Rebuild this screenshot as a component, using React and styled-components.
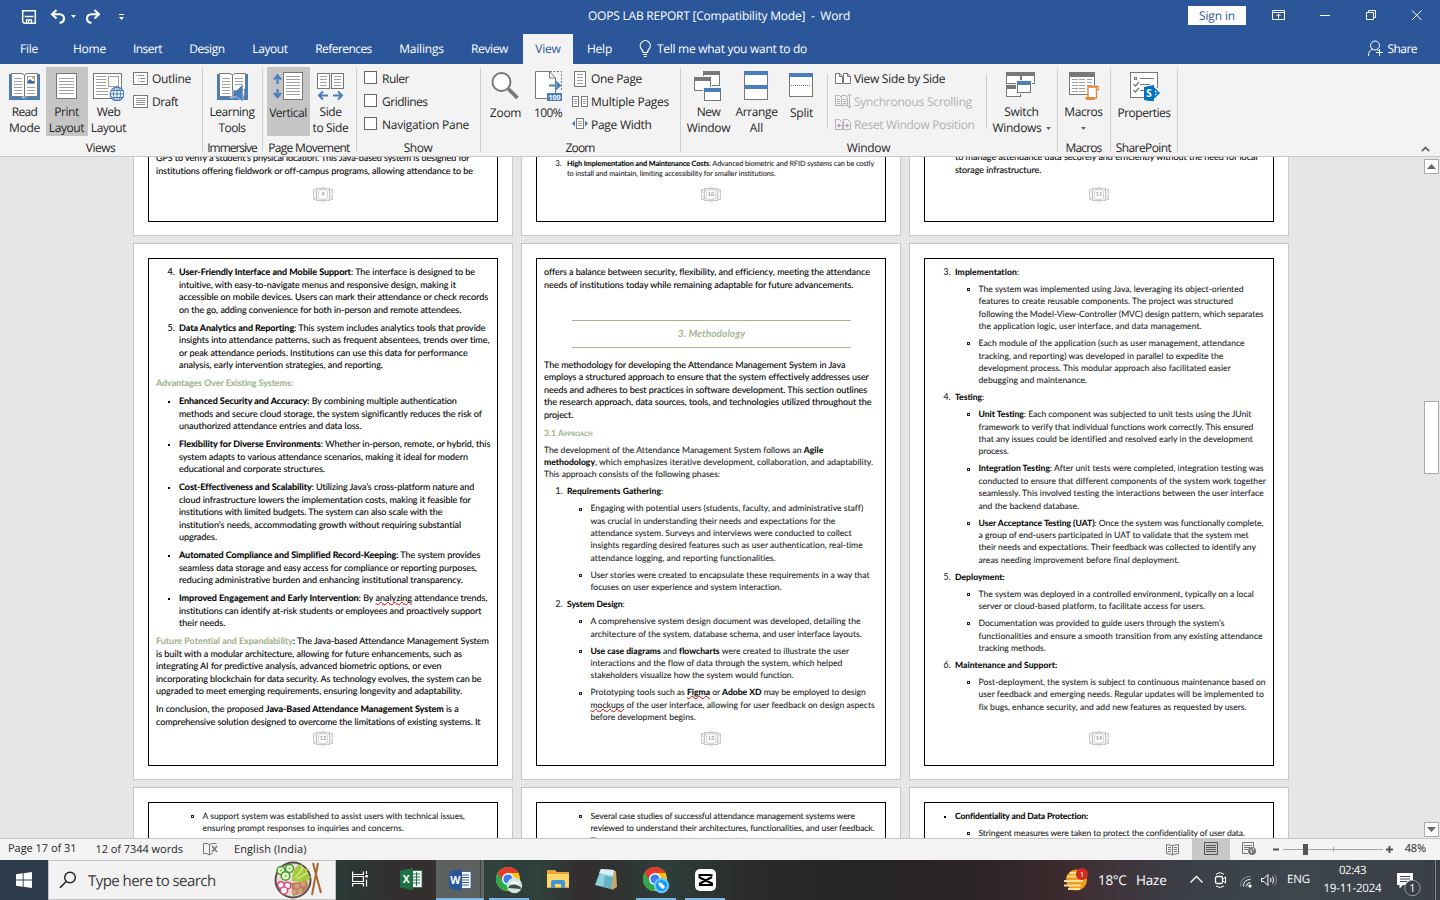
import React, { useLayoutEffect, useRef } from "react";
import styled, { createGlobalStyle, css } from "styled-components";

const Global = createGlobalStyle`
  * { box-sizing: border-box; }
  body { margin: 0; overflow: hidden; background: #e6e6e6; }
  svg { display: block; flex: none; }
`;

const UI = `"Open Sans", "Noto Sans", sans-serif`;
const DOC = `Lato, "Open Sans", sans-serif`;

/* ---------- text whose tracking is adjusted to a measured width ---------- */
const FitSpan = styled.span`
  display: inline-block;
  white-space: pre;
  text-rendering: geometricPrecision;
`;

function Fit({ w, children, className }) {
  const ref = useRef(null);
  useLayoutEffect(() => {
    const el = ref.current;
    el.style.letterSpacing = "0px";
    const natural = el.getBoundingClientRect().width;
    const n = el.textContent.length;
    if (w && n) el.style.letterSpacing = `${(w - natural) / n}px`;
  }, [w, children]);
  return <FitSpan ref={ref} className={className}>{children}</FitSpan>;
}

/* ---------- shell ---------- */
const Window = styled.div`
  width: 1440px;
  height: 900px;
  display: flex;
  flex-direction: column;
  overflow: hidden;
  font-family: ${UI};
  font-size: 12px;
  color: #262626;
`;

const TitleBar = styled.header`
  height: 34px;
  flex: none;
  background: #2b579a;
  color: #fff;
  display: flex;
  align-items: center;
`;
const QuickAccess = styled.div`
  display: flex;
  align-items: center;
  padding: 0 0 1px 20px;
  width: 588px;
`;
const Title = styled.div`
  width: 600px;
  line-height: 16px;
  padding-bottom: 2px;
`;
const SignIn = styled.div`
  width: 58px;
  height: 19px;
  margin-top: -3px;
  background: #fff;
  color: #2b579a;
  display: flex;
  align-items: center;
  justify-content: center;
`;
const WindowControls = styled.div`
  display: flex;
  align-items: center;
  padding-left: 26px;
  padding-bottom: 4px;
`;

const TabBar = styled.nav`
  height: 30px;
  flex: none;
  background: #2b579a;
  color: #fff;
  display: flex;
`;
const Tab = styled.div`
  width: ${(p) => p.$w}px;
  display: flex;
  align-items: center;
  justify-content: center;
  padding-bottom: 1px;
  ${(p) => p.$active && css`background: #f3f3f3; color: #2b579a;`}
`;
const TellMe = styled.div`
  display: flex;
  align-items: center;
  gap: 5px;
  padding: 0 0 1px 13px;
  flex: 1;
`;
const Share = styled.div`
  display: flex;
  align-items: center;
  gap: 4px;
  padding: 0 23px 1px 0;
`;

/* ---------- ribbon ---------- */
const Ribbon = styled.section`
  height: 93px;
  flex: none;
  background: #f3f3f3;
  border-bottom: 1px solid #c8c8c8;
  display: flex;
`;
const GroupBox = styled.div`
  width: ${(p) => p.$w}px;
  padding-top: 3px;
  display: flex;
  flex-direction: column;
  background: linear-gradient(#cfcfcf, #cfcfcf) right 4px / 1px 84px no-repeat;
`;
const GroupBody = styled.div`
  height: 72px;
  display: flex;
  padding-left: ${(p) => p.$pad || 0}px;
`;
const GroupLabel = styled.div`
  line-height: 16px;
  display: flex;
  justify-content: center;
  padding: 1px 2px 0 0;
`;
const BigButton = styled.div`
  width: ${(p) => p.$w}px;
  height: 69px;
  padding-right: 1px;
  display: flex;
  flex-direction: column;
  align-items: center;
  background: ${(p) => (p.$on ? "#c5c5c5" : "transparent")};
`;
const BigIcon = styled.div`
  height: 38px;
  display: flex;
  align-items: center;
  padding: 0 1px 2px 0;
`;
const BigLabel = styled.div`
  height: 16px;
  line-height: 16px;
  display: flex;
  justify-content: center;
  align-items: center;
  gap: 4px;
  white-space: nowrap;
`;
const SmallColumn = styled.div`
  width: ${(p) => p.$w}px;
  padding-left: ${(p) => p.$pad || 0}px;
`;
const SmallRow = styled.div`
  height: 23px;
  display: flex;
  align-items: center;
  gap: ${(p) => p.$gap ?? 4}px;
  color: ${(p) => (p.$off ? "#b1b1b1" : "inherit")};
`;
const SmallIcon = styled.div`
  width: 16px;
`;
const CheckBox = styled.div`
  width: 13px;
  height: 13px;
  margin-top: -2px;
  border: 1px solid #666;
  background: #fff;
`;
const Divider = styled.div`
  width: 1px;
  height: 55px;
  margin-top: 7px;
  margin-left: ${(p) => p.$gap || 0}px;
  background: #cfcfcf;
`;
const Collapse = styled.div`
  margin: auto 10px 4px auto;
`;

/* ---------- document ---------- */
const DocArea = styled.main`
  height: 681px;
  flex: none;
  display: flex;
  overflow: hidden;
  background: #e6e6e6;
`;
const Sheets = styled.div`
  width: 1424px;
  padding-left: 133px;
  margin-top: -458px;
  display: grid;
  grid-template-columns: repeat(3, 380px);
  grid-auto-rows: 537px;
  gap: 7px 8px;
  align-content: start;
`;
const Sheet = styled.article`
  background: #fff;
  border: 1px solid #c6c6c6;
  padding: 14px 14px 13px;
`;
const Frame = styled.div`
  width: 350px;
  height: 508px;
  border: 1px solid #000;
  padding: 7px 0 0 7px;
  display: flex;
  flex-direction: column;
`;
const Body = styled.div`
  flex: 1;
  min-height: 0;
  display: flex;
  flex-direction: column;
  justify-content: ${(p) => (p.$end ? "flex-end" : "flex-start")};
  padding-bottom: ${(p) => (p.$end || 0)}px;
  font-family: ${DOC};
`;
const sizes = {
  normal: css`font-size: 9px; line-height: 12.5px; color: #000; -webkit-text-stroke: 0.1px #000;`,
  soft: css`font-size: 8.6px; line-height: 12.4px; color: #222; -webkit-text-stroke: 0.08px #222;`,
  tiny: css`font-size: 7.3px; line-height: 10px; color: #222; -webkit-text-stroke: 0.08px #222;`,
};
const Para = styled.div`
  flex: none;
  display: flex;
  align-items: flex-start;
  padding-left: ${(p) => [0, 11.5, 35][p.$level]}px;
  margin-bottom: ${(p) => (p.$kind === "normal" ? 5.55 : 4.6)}px;
  ${(p) => sizes[p.$kind]}
  ${(p) => p.$green && css`color: #a5b592; -webkit-text-stroke-color: #a5b592; font-weight: 700;`}
  ${(p) => p.$caps && css`font-variant: small-caps;`}
  &:last-child { margin-bottom: 0; }
`;
const Marker = styled.span`
  width: 11.5px;
  flex: none;
  display: flex;
  align-items: center;
  height: 1lh;
`;
const Dot = styled.i`
  width: 2px;
  height: 2px;
  margin-top: 1px;
  background: #000;
`;
const Ring = styled.i`
  width: 3px;
  height: 3px;
  margin-top: 1px;
  border: 1px solid #222;
`;
const Lines = styled.div`
  display: flex;
  flex-direction: column;
  align-items: flex-start;
  & > span { height: 1lh; }
`;
const Strong = styled.b`
  font-weight: 700;
  color: #000;
`;
const Green = styled.b`
  color: #a5b592;
  -webkit-text-stroke-color: #a5b592;
`;
const Misspelt = styled.span`
  text-decoration: underline wavy #e00000 0.9px;
  text-underline-offset: 0;
  text-decoration-skip-ink: none;
`;
const Heading = styled.div`
  flex: none;
  width: 279px;
  height: 28px;
  margin: 23.2px 0 10.8px 28px;
  padding-top: 1px;
  border: solid #a5b592;
  border-width: 1px 0;
  display: flex;
  align-items: center;
  justify-content: center;
  color: #a5b592;
  font-size: 10px;
  font-style: italic;
  font-weight: 700;
`;
const BadgeRow = styled.div`
  flex: none;
  height: 17px;
  margin: 0 7px 18px 0;
  display: flex;
  justify-content: center;
`;

function rich(text) {
  return text.split(/(\*\*.+?\*\*|\[\[.+?\]\]|\{\{.+?\}\})/).map((t, i) => {
    if (t.startsWith("**")) return <Strong key={i}>{rich(t.slice(2, -2))}</Strong>;
    if (t.startsWith("[[")) return <Misspelt key={i}>{t.slice(2, -2)}</Misspelt>;
    if (t.startsWith("{{")) return <Green key={i}>{t.slice(2, -2)}</Green>;
    return t;
  });
}

function P({ kind = "normal", level = 0, mark, lines, green, caps }) {
  return (
    <Para $kind={kind} $level={level} $green={green} $caps={caps}>
      {level > 0 && <Marker>{mark === "dot" ? <Dot /> : mark === "ring" ? <Ring /> : mark}</Marker>}
      <Lines>
        {lines.map(([w, t]) => <Fit key={t} w={w}>{rich(t)}</Fit>)}
      </Lines>
    </Para>
  );
}

function PageBadge({ n }) {
  return (
    <svg width="20" height="17" viewBox="0 0 20 17" fill="none" stroke="#c6c6c6">
      <path d="M10 .6l3.500 2.500h-7zM10 16.400l3.500-2.500h-7z" strokeWidth=".8" />
      <rect x="3.500" y="2.500" width="13" height="12" />
      <path d="M3 3.500H.5v10H3M17 3.500h2.500v10H17" strokeWidth=".9" />
      <path d="M1 4l2.500 4.500L1 13M19 4l-2.500 4.500L19 13M4 12.500q6 1.500 12 0M4 4.500q6-1.500 12 0M5.500 5v7M14.500 5v7" strokeWidth=".7" />
      <text x="10" y="10.300" textAnchor="middle" fontSize="5.500" fontFamily="Lato, sans-serif" fontWeight="700" fill="#999" stroke="none">{n}</text>
    </svg>
  );
}

function Page({ n, end, children }) {
  return (
    <Sheet>
      <Frame>
        <Body $end={end}>{children}</Body>
        <BadgeRow><PageBadge n={n} /></BadgeRow>
      </Frame>
    </Sheet>
  );
}

const S = (level, mark, lines) => ({ kind: "soft", level, mark, lines });
const N = (level, mark, lines) => ({ level, mark, lines });

const page12 = [
  N(1, "4.", [[296, "**User-Friendly Interface and Mobile Support**: The interface is designed to be"], [277, "intuitive, with easy-to-navigate menus and responsive design, making it"], [308.7, "accessible on mobile devices. Users can mark their attendance or check records"], [282, "on the go, adding convenience for both in-person and remote attendees."]]),
  N(1, "5.", [[307, "**Data Analytics and Reporting**: This system includes analytics tools that provide"], [310, "insights into attendance patterns, such as frequent absentees, trends over time,"], [288.7, "or peak attendance periods. Institutions can use this data for performance"], [204.3, "analysis, early intervention strategies, and reporting."]]),
  { green: true, lines: [[137.3, "Advantages Over Existing Systems:"]] },
  N(1, "dot", [[278.3, "**Enhanced Security and Accuracy**: By combining multiple authentication"], [302.7, "methods and secure cloud storage, the system significantly reduces the risk of"], [182.3, "unauthorized attendance entries and data loss."]]),
  N(1, "dot", [[311.3, "**Flexibility for Diverse Environments**: Whether in-person, remote, or hybrid, this"], [288.7, "system adapts to various attendance scenarios, making it ideal for modern"], [146, "educational and corporate structures."]]),
  N(1, "dot", [[295, "**Cost-Effectiveness and Scalability**: Utilizing Java’s cross-platform nature and"], [292, "cloud infrastructure lowers the implementation costs, making it feasible for"], [263.7, "institutions with limited budgets. The system can also scale with the"], [282.7, "institution’s needs, accommodating growth without requiring substantial"], [38, "upgrades."]]),
  N(1, "dot", [[301.3, "**Automated Compliance and Simplified Record-Keeping**: The system provides"], [298, "seamless data storage and easy access for compliance or reporting purposes,"], [284.3, "reducing administrative burden and enhancing institutional transparency."]]),
  N(1, "dot", [[308.3, "**Improved Engagement and Early Intervention**: By [[analyzing]] attendance trends,"], [303, "institutions can identify at-risk students or employees and proactively support"], [46.3, "their needs."]]),
  N(0, "", [[332.7, "{{Future Potential and Expandability}}: The Java-based Attendance Management System"], [306, "is built with a modular architecture, allowing for future enhancements, such as"], [286, "integrating AI for predictive analysis, advanced biometric options, or even"], [325.7, "incorporating blockchain for data security. As technology evolves, the system can be"], [306.3, "upgraded to meet emerging requirements, ensuring longevity and adaptability."]]),
  N(0, "", [[302.3, "In conclusion, the proposed **Java-Based Attendance Management System** is a"], [325, "comprehensive solution designed to overcome the limitations of existing systems. It"]]),
];

const page13 = [
  N(0, "", [[301, "The methodology for developing the Attendance Management System in Java"], [324.7, "employs a structured approach to ensure that the system effectively addresses user"], [323.3, "needs and adheres to best practices in software development. This section outlines"], [327.7, "the research approach, data sources, tools, and technologies utilized throughout the"], [29.3, "project."]]),
  { kind: "soft", green: true, caps: true, lines: [[48.7, "3.1 Approach"]] },
  S(0, "", [[279, "The development of the Attendance Management System follows an **Agile**"], [329.3, "**methodology**, which emphasizes iterative development, collaboration, and adaptability."], [176, "This approach consists of the following phases:"]]),
  S(1, "1.", [[96.3, "**Requirements Gathering**:"]]),
  S(2, "ring", [[272.7, "Engaging with potential users (students, faculty, and administrative staff)"], [245, "was crucial in understanding their needs and expectations for the"], [260.7, "attendance system. Surveys and interviews were conducted to collect"], [272.7, "insights regarding desired features such as user authentication, real-time"], [185.3, "attendance logging, and reporting functionalities."]]),
  S(2, "ring", [[279, "User stories were created to encapsulate these requirements in a way that"], [191.3, "focuses on user experience and system interaction."]]),
  S(1, "2.", [[57.7, "**System Design**:"]]),
  S(2, "ring", [[270, "A comprehensive system design document was developed, detailing the"], [271.3, "architecture of the system, database schema, and user interface layouts."]]),
  S(2, "ring", [[258.7, "**Use case diagrams** and **flowcharts** were created to illustrate the user"], [252, "interactions and the flow of data through the system, which helped"], [203.3, "stakeholders visualize how the system would function."]]),
  S(2, "ring", [[275.3, "Prototyping tools such as **[[Figma]]** or **Adobe XD** may be employed to design"], [284.3, "[[mockups]] of the user interface, allowing for user feedback on design aspects"], [105.3, "before development begins."]]),
];

const page14 = [
  S(1, "3.", [[64.3, "**Implementation**:"]]),
  S(2, "ring", [[265, "The system was implemented using Java, leveraging its object-oriented"], [254.7, "features to create reusable components. The project was structured"], [284.7, "following the Model-View-Controller (MVC) design pattern, which separates"], [223.3, "the application logic, user interface, and data management."]]),
  S(2, "ring", [[266, "Each module of the application (such as user management, attendance"], [245, "tracking, and reporting) was developed in parallel to expedite the"], [252.3, "development process. This modular approach also facilitated easier"], [108.7, "debugging and maintenance."]]),
  S(1, "4.", [[29.3, "**Testing**:"]]),
  S(2, "ring", [[273, "**Unit Testing**: Each component was subjected to unit tests using the JUnit"], [275, "framework to verify that individual functions work correctly. This ensured"], [274.3, "that any issues could be identified and resolved early in the development"], [30.3, "process."]]),
  S(2, "ring", [[285.3, "**Integration Testing**: After unit tests were completed, integration testing was"], [287, "conducted to ensure that different components of the system work together"], [285.3, "seamlessly. This involved testing the interactions between the user interface"], [100.7, "and the backend database."]]),
  S(2, "ring", [[285.3, "**User Acceptance Testing (UAT)**: Once the system was functionally complete,"], [270.3, "a group of end-users participated in UAT to validate that the system met"], [277.7, "their needs and expectations. Their feedback was collected to identify any"], [200.7, "areas needing improvement before final deployment."]]),
  S(1, "5.", [[49.7, "**Deployment:**"]]),
  S(2, "ring", [[275.3, "The system was deployed in a controlled environment, typically on a local"], [226.3, "server or cloud-based platform, to facilitate access for users."]]),
  S(2, "ring", [[246, "Documentation was provided to guide users through the system’s"], [284.3, "functionalities and ensure a smooth transition from any existing attendance"], [67.3, "tracking methods."]]),
  S(1, "6.", [[102.3, "**Maintenance and Support:**"]]),
  S(2, "ring", [[287.3, "Post-deployment, the system is subject to continuous maintenance based on"], [285.3, "user feedback and emerging needs. Regular updates will be implemented to"], [268, "fix bugs, enhance security, and add new features as requested by users."]]),
];

const list = (items) => items.map((p, i) => <P key={i} {...p} />);

/* ---------- scrollbar ---------- */
const ScrollTrack = styled.div`
  width: 16px;
  padding: 2px 1px 1px 0;
  display: flex;
  flex-direction: column;
`;
const ScrollButton = styled.div`
  height: 15px;
  border: 1px solid #ababab;
  background: #fff;
  display: flex;
  align-items: center;
  justify-content: center;
`;
const ScrollThumb = styled.div`
  height: 73px;
  margin: 227px 0 auto;
  border: 1px solid #ababab;
  background: #fff;
`;

/* ---------- status bar ---------- */
const StatusBar = styled.footer`
  height: 22px;
  flex: none;
  background: #f3f3f3;
  border-top: 1px solid #c6c6c6;
  display: flex;
  align-items: center;
  font-size: 11px;
`;
const StatusItem = styled.div`
  width: ${(p) => p.$w}px;
  line-height: 16px;
  padding-left: ${(p) => p.$pad || 0}px;
  padding-bottom: ${(p) => p.$lift || 0}px;
`;
const ViewMode = styled.div`
  width: 38px;
  height: 21px;
  display: flex;
  align-items: center;
  justify-content: center;
  background: ${(p) => (p.$on ? "#c8c8c8" : "transparent")};
`;
const ZoomSlider = styled.div`
  padding: 0 0 2px 5px;
  width: 136.7px;
`;

/* ---------- taskbar ---------- */
const TaskBar = styled.footer`
  height: 40px;
  flex: none;
  display: flex;
  align-items: stretch;
  color: #fff;
  background: linear-gradient(90deg, #2d3d4b 0, #2d3d4b 48px, #2a3a36 336px, #332f2f 395px, #332f2f 430px, #2e413d 490px, #30403c 540px, #332f2f 580px, #2f3331 620px, #2e3f3c 665px, #2b2b2b 745px, #262524 860px, #2d2526 990px, #3b292c 1050px, #40343a 1110px, #3a4149 1200px, #3e464d 1300px, #393f47 1440px);
`;
const Start = styled.div`
  width: 48px;
  display: flex;
  align-items: center;
  justify-content: center;
`;
const Search = styled.div`
  width: 288px;
  background: #f2f2f2;
  border: 1px solid #c4c4c4;
  color: #3b3b3b;
  display: flex;
  align-items: center;
  padding-left: 10px;
  font-size: 15px;
`;
const SearchText = styled.div`
  width: 196px;
  padding-left: 11px;
  line-height: 20px;
`;
const TaskItem = styled.div`
  width: ${(p) => p.$w || 48}px;
  padding: 0 0 ${(p) => (p.$open ? 0 : 2)}px ${(p) => p.$pad || 0}px;
  display: flex;
  align-items: center;
  justify-content: center;
  ${(p) => p.$active && css`background: linear-gradient(90deg, #5d6160 44px, #3a4340 44px, #3a4340 45px, #5d6866 45px);`}
  ${(p) => p.$open && css`
    &::after { content: ""; position: absolute; width: ${p.$active ? 48 : 40}px; height: 2px; margin-top: 38px; background: #76b9ed; }
  `}
`;
const Tray = styled.div`
  margin-left: auto;
  width: 376px;
  display: flex;
  align-items: center;
  font-size: 13.5px;
`;
const TraySlot = styled.div`
  width: ${(p) => p.$w}px;
  display: flex;
  align-items: center;
  flex-direction: ${(p) => (p.$col ? "column" : "row")};
  justify-content: ${(p) => (p.$mid ? "center" : "flex-start")};
  font-size: ${(p) => p.$size || 13.5}px;
  line-height: 18px;
`;
const ShowDesktop = styled.div`
  width: 5px;
  height: 40px;
  margin-left: auto;
  border-left: 1px solid #7c8287;
`;

/* ---------- icons ---------- */
const G = "#777";
const B = "#4a7ebb";
const hlines = (x1, x2, ys) => ys.map((y) => `M${x1} ${y}H${x2}`).join("");

const Svg = ({ w = 32, h = 32, children, ...r }) => (
  <svg width={w} height={h} viewBox={`0 0 ${w} ${h}`} fill="none" {...r}>{children}</svg>
);
const Book = () => (
  <>
    <path d="M1 5H3V28H13L16 29.500L19 28H29V5H32V31H1Z" fill={B} />
    <path d="M3.500 4.500H13Q15 4.500 16.500 6Q18 4.500 20 4.500H29.500V27.500H19.500Q17.500 27.500 16.500 28.500Q15.500 27.500 13.500 27.500H3.500Z" fill="#fff" stroke={G} />
    <path d="M16.500 6V28" stroke={G} />
    <path d={hlines(6, 14, [9.5, 12.5, 15.5, 18.5, 21.5, 24.5])} stroke="#a0a0a0" />
  </>
);
const IconRead = () => (
  <Svg><Book /><rect x="19.500" y="7.500" width="7" height="7" fill="#fff" stroke="#a0a0a0" /><path d="M20 14V12l2-2 2 2h2v2z" fill="#2f6aa8" /><rect x="24" y="8" width="2" height="2" fill="#f2b880" /><path d={hlines(19, 27, [18.5, 21.5, 24.5])} stroke="#a0a0a0" /></Svg>
);
const IconPrint = () => (
  <Svg><rect x="6.500" y="4.500" width="20" height="25" fill="#fff" stroke={G} /><path d={hlines(9, 24, [9.5, 12.5, 15.5, 18.5, 21.5, 24.5])} stroke="#a0a0a0" /></Svg>
);
const IconWeb = () => (
  <Svg><rect x="1.500" y="4.500" width="28" height="25" fill="#fff" stroke={G} /><path d={hlines(4, 14, [7.5, 10.5, 13.5, 16.5]) + hlines(4, 16, [19.5, 22.5, 25.5])} stroke="#a0a0a0" /><rect x="16.500" y="7.500" width="10" height="10" stroke="#a0a0a0" /><circle cx="25" cy="25" r="6.800" fill="#fff" stroke={B} strokeWidth="1.300" /><path d="M18 25H32M25 18V32M19.500 21.500H30.500M19.500 28.500H30.500" stroke={B} /><ellipse cx="25" cy="25" rx="3.500" ry="7" stroke={B} /></Svg>
);
const IconLearn = () => (
  <Svg><Book /><path d={hlines(19, 27, [9.5, 12.5, 15.5])} stroke="#a0a0a0" /><path d="M17 21h4l6-6v18l-6-5h-4z" fill={B} stroke="#f3f3f3" strokeWidth=".6" /><path d="M28 20q2 3 0 7M29.500 17q4 6 0 12.500" stroke={B} strokeWidth="1.300" /></Svg>
);
const IconVertical = () => (
  <Svg><path d="M5.500 6.500V15M5.500 20V28M2 10.500l3.500-4 3.500 4M2 24l3.500 4 3.500-4" stroke={B} strokeWidth="2.200" /><rect x="11.500" y="3.500" width="19" height="27" fill="#fff" stroke={G} /><path d={hlines(14, 28, [7.5, 10.5, 13.5, 16.5, 19.5, 22.5, 25.5])} stroke="#a0a0a0" /></Svg>
);
const IconSide = () => (
  <Svg><rect x="3.500" y="4.500" width="12" height="15" fill="#fff" stroke={G} /><rect x="17.500" y="4.500" width="12" height="15" fill="#fff" stroke={G} /><path d={hlines(6, 13, [7.5, 10.5, 13.5, 16.5]) + hlines(20, 27, [7.5, 10.5, 13.5, 16.5])} stroke="#a0a0a0" /><path d="M5 26.500H14M19 26.500H28M9 22.500l-4 4 4 4M24 22.500l4 4-4 4" stroke={B} strokeWidth="2" /></Svg>
);
const IconZoom = () => (
  <Svg><circle cx="12.500" cy="13" r="9" fill="#fff" stroke={G} strokeWidth="2" /><path d="M19.500 20L28.500 29" stroke={G} strokeWidth="3.800" /></Svg>
);
const Icon100 = () => (
  <Svg><path d="M18 2.500H29.500V22" stroke={G} strokeDasharray="2 1.500" /><path d="M3.500 2.500H17.500L23.500 9V29.500H3.500Z" fill="#fff" stroke={G} /><path d="M17.500 2.500V9H23.500" stroke={G} /><path d="M17 16.500H27M23.500 12.500l4.500 4-4.500 4" stroke={B} strokeWidth="2" /><rect x="15" y="24" width="15" height="8" fill={B} /><text x="22.500" y="30.500" textAnchor="middle" fontSize="7" fontWeight="700" fontFamily="Open Sans" fill="#fff">100</text></Svg>
);
const Win = ({ x, y, w, h, c = G }) => (
  <><rect x={x + 0.5} y={y + 0.5} width={w - 1} height={h - 1} fill="#fff" stroke={G} /><rect x={x} y={y} width={w} height="4" fill={c} /></>
);
const IconNewWin = () => (
  <Svg><Win x={11} y={2} w={17} h={15} /><rect x="1" y="7" width="19" height="16" fill="#f3f3f3" /><Win x={2} y={8} w={17} h={14} /><rect x="11" y="18" width="19" height="15" fill="#f3f3f3" /><Win x={12} y={19} w={17} h={13} c={B} /></Svg>
);
const IconArrange = () => (
  <Svg><Win x={4} y={2} w={24} h={17} c={B} /><Win x={4} y={16} w={24} h={15} c={B} /></Svg>
);
const IconSplit = () => (
  <Svg><Win x={4} y={4} w={24} h={24} c={B} /><path d="M6 16.500H26" stroke={B} strokeDasharray="1 1" /></Svg>
);
const IconSwitch = () => (
  <Svg><Win x={1} y={3} w={15} h={12} /><Win x={16} y={3} w={14} h={12} /><Win x={1} y={16} w={15} h={12} /><rect x="11" y="11" width="16" height="14" fill="#f3f3f3" /><Win x={12} y={12} w={14} h={12} c={B} /></Svg>
);
const IconMacros = () => (
  <Svg><rect x="2.500" y="3.500" width="25" height="22" fill="#fff" stroke={G} /><rect x="2" y="3" width="26" height="5" fill={G} /><path d={[10.5, 13.5, 16.5, 19.5, 22.5].map((y) => `M5 ${y}h6M12 ${y}h6M20 ${y}h5`).join("")} stroke="#a0a0a0" /><path d="M21 18h8.500v11H21z" fill="#fff" stroke="#e28b43" strokeWidth="1.400" /><path d="M18 28h10v3h-9z" fill="#e28b43" /><path d="M22 17.500h9q2 .5 1 3H30" stroke="#e28b43" strokeWidth="1.300" /></Svg>
);
const IconProps = () => (
  <Svg><rect x="2.500" y="3.500" width="27" height="25" fill="#fff" stroke={G} /><rect x="6.500" y="8.500" width="2" height="2" stroke={G} /><path d="M12 9.500H26M12 15.500H22M12 21.500H16M5.500 15l2 2 3.500-4M5.500 21l2 2 3.500-4" stroke={G} strokeWidth="1.200" /><path d="M25 17l6 3v8l-6 3.500z" fill="#fff" /><path d="M26 19l5 5-5 5M26 24h4M27 20q-2 4 0 8" stroke="#0072c6" strokeWidth="1.500" /><path d="M16 18l10-2v17l-10-2z" fill="#0072c6" /><text x="21" y="28" textAnchor="middle" fontSize="10" fontWeight="700" fontFamily="Open Sans" fill="#fff">S</text></Svg>
);
const small = {
  outline: <Svg w={16} h={16}><rect x=".5" y="1.500" width="14" height="12" fill="#fff" stroke={G} /><path d="M3 4.500h1M5 4.500h6M5 7.500h1M7 7.500h5M5 10.500h1M7 10.500h5" stroke="#909090" /></Svg>,
  draft: <Svg w={16} h={16}><rect x=".5" y="1.500" width="14" height="12" fill="#fff" stroke={G} /><path d={hlines(3, 12, [4.5, 6.5, 8.5, 10.5])} stroke="#909090" /></Svg>,
  one: <Svg w={16} h={18}><rect x="2.500" y="1.500" width="11" height="15" fill="#fff" stroke={G} /><path d={hlines(5, 11, [4.5, 7.5, 10.5, 13.5])} stroke="#a0a0a0" /></Svg>,
  multi: <Svg w={16} h={16}><rect x=".5" y="2.500" width="6" height="10" fill="#fff" stroke={G} /><rect x="9.500" y="2.500" width="6" height="10" fill="#fff" stroke={G} /><path d={hlines(2, 5, [5.5, 7.5, 9.5]) + hlines(11, 14, [5.5, 7.5, 9.5])} stroke="#a0a0a0" /></Svg>,
  width: <Svg w={16} h={16}><rect x="4.500" y="1.500" width="7" height="10" fill="#fff" stroke={G} /><path d={hlines(6, 10, [4.5, 6.5, 8.5])} stroke="#a0a0a0" /><path d="M0 6.500l3-3v6zM16 6.500l-3-3v6z" fill={B} /></Svg>,
  side: <Svg w={17} h={16}><path d="M.5 2.500h4l3 3v7h-7zM8.500 2.500h4l3 3v7h-7z" fill="#fff" stroke={G} /><path d="M4.500 2.500v3h3M12.500 2.500v3h3" stroke={G} /></Svg>,
  sync: <Svg w={17} h={17}><path d="M.5 2.500h4l2 2v8h-6zM6.500 2.500h4l2 2v8h-6z" stroke="#b5adb8" /><path d="M2 6.500h3M2 8.500h3M2 10.500h3M8 6.500h3M8 8.500h3M8 10.500h3M14.500 1V15M12.500 3l2-2 2 2M12.500 13l2 2 2-2" stroke="#b5adb8" /></Svg>,
  reset: <Svg w={17} h={16}><path d="M.5 2.500h4l3 3v7h-7zM8.500 2.500h4l3 3v7h-7z" stroke="#b5adb8" /><path d="M2 8.500h4M4 6.500v4M10 8.500h4M12 6.500v4" stroke="#a48fae" /></Svg>,
};
const Caret = () => <Svg w={5} h={3}><path d="M0 0h5L2.500 3z" fill="#666" /></Svg>;

const QatIcons = () => (
  <Svg w={110} h={16}>
    <path d="M2.700 1.700H15.300V14.300H4.200L2.700 12.800Z" stroke="#fff" strokeWidth="1.500" /><path d="M4.500 7.500h9M6.500 14.500v-3.500h5v3.500" stroke="#fff" strokeWidth="1.300" /><path d="M8.500 12v2" stroke="#fff" />
    <path d="M36.500 1l-4.500 4.200 4.500 4.200M32.500 5.200h7q4.500 .3 4.500 4.300t-4.500 4.300" stroke="#fff" strokeWidth="2.100" />
    <path d="M51 6h5l-2.500 3z" fill="#fff" />
    <path d="M74.500 1l4.500 4.200-4.500 4.200M78.500 5.200h-7q-4.500 .3-4.500 4.300t4.500 4.300" stroke="#fff" strokeWidth="2.100" />
    <path d="M99 5.500h5" stroke="#fff" /><path d="M99 8h5l-2.500 3z" fill="#fff" />
  </Svg>
);

const Big = ({ w, on, icon, l1, l2, caret }) => (
  <BigButton $w={w} $on={on}>
    <BigIcon>{icon}</BigIcon>
    <BigLabel><Fit w={l1[0]}>{l1[1]}</Fit></BigLabel>
    {(l2 || caret) && <BigLabel>{l2 && <Fit w={l2[0]}>{l2[1]}</Fit>}{caret && <Caret />}</BigLabel>}
  </BigButton>
);
const Small = ({ icon, w, off, children, gap }) => (
  <SmallRow $off={off} $gap={gap}><SmallIcon>{icon}</SmallIcon><Fit w={w}>{children}</Fit></SmallRow>
);
const Group = ({ w, pad, label, children }) => (
  <GroupBox $w={w}>
    <GroupBody $pad={pad}>{children}</GroupBody>
    <GroupLabel><Fit w={label[0]}>{label[1]}</Fit></GroupLabel>
  </GroupBox>
);

const Chrome = ({ children }) => (
  <Svg w={27} h={27}>
    <circle cx="12" cy="12" r="12" fill="#fbc116" />
    <path d="M12 12L1.600 6A12 12 0 0 0 11 24l5-9z" fill="#2da94f" />
    <path d="M1.600 6A12 12 0 0 1 22.400 6H12l-5 8z" fill="#e33b2e" />
    <circle cx="12" cy="12" r="6" fill="#fff" /><circle cx="12" cy="12" r="4.600" fill="#3b7ded" />
    {children}
  </Svg>
);
const Office = ({ c, letter, kids }) => (
  <Svg w={24} h={24}><rect x="12" y="3.500" width="11" height="17" fill="#fff" stroke={c} strokeWidth=".8" />{kids}<path d="M1 3.500L14 1v22L1 20.500z" fill={c} /><text x="7.300" y="16" textAnchor="middle" fontFamily="Open Sans" fontWeight="700" fontSize="10.500" fill="#fff">{letter}</text></Svg>
);

const tabs = [["File", 58, 18], ["Home", 63, 33], ["Insert", 53, 29], ["Design", 66, 35.3], ["Layout", 60, 35.5], ["References", 87, 56.6], ["Mailings", 69, 44.6], ["Review", 67, 37], ["View", 50, 25.3], ["Help", 53, 25]];

export default function App() {
  return (
    <Window>
      <Global />
      <TitleBar>
        <QuickAccess><QatIcons /></QuickAccess>
        <Title><Fit w={262}>{"OOPS LAB REPORT [Compatibility Mode]  -  Word"}</Fit></Title>
        <SignIn><Fit w={36}>Sign in</Fit></SignIn>
        <WindowControls>
          <Svg w={150} h={14} stroke="#fff">
            <path d="M.5 2.500h12v9H.5zM.5 4.500h12M6.500 10.500V6M4.500 8l2-2 2 2" />
            <path d="M48 7.500h10" />
            <path d="M94.500 4.500h7v7h-7zM96.500 4.500v-2h7v7h-2" />
            <path d="M140 2.500l9.500 9.500M149.500 2.500L140 12" />
          </Svg>
        </WindowControls>
      </TitleBar>
      <TabBar>
        {tabs.map(([t, w, tw]) => <Tab key={t} $w={w} $active={t === "View"}><Fit w={tw}>{t}</Fit></Tab>)}
        <TellMe>
          <Svg w={13} h={17} stroke="#fff"><path d="M4 12.500q0-2-1.500-3.500a5 5 0 1 1 7.500 0q-1.500 1.500-1.500 3.500zM4.200 14.500h4M5 16.500h2.500" strokeWidth="1.200" /></Svg>
          <Fit w={150}>Tell me what you want to do</Fit>
        </TellMe>
        <Share>
          <Svg w={15} h={17} stroke="#fff"><circle cx="7" cy="5.500" r="4.500" /><path d="M.5 16q0-6 4.500-7M9 9.500l1.500 1M11.500 9v7M8 12.500h7" /></Svg>
          <Fit w={29.5}>Share</Fit>
        </Share>
      </TabBar>
      <Ribbon>
        <Group w={203} pad={4} label={[29.3, "Views"]}>
          <Big w={42} icon={<IconRead />} l1={[25.3, "Read"]} l2={[31, "Mode"]} />
          <Big w={42} on icon={<IconPrint />} l1={[24.5, "Print"]} l2={[35.5, "Layout"]} />
          <Big w={42} icon={<IconWeb />} l1={[23.5, "Web"]} l2={[35.5, "Layout"]} />
          <SmallColumn $w={70} $pad={3}>
            <Small icon={small.outline} w={39} gap={3}>Outline</Small>
            <Small icon={small.draft} w={26} gap={3}>Draft</Small>
          </SmallColumn>
        </Group>
        <Group w={60} pad={1} label={[49.5, "Immersive"]}>
          <Big w={57} icon={<IconLearn />} l1={[45, "Learning"]} l2={[27, "Tools"]} />
        </Group>
        <Group w={94} pad={4} label={[81.3, "Page Movement"]}>
          <Big w={43} on icon={<IconVertical />} l1={[37.6, "Vertical"]} />
          <Big w={42} icon={<IconSide />} l1={[22, "Side"]} l2={[36, "to Side"]} />
        </Group>
        <Group w={124} pad={7} label={[28.5, "Show"]}>
          <SmallColumn $w={110}>
            <SmallRow $gap={5}><CheckBox /><Fit w={27}>Ruler</Fit></SmallRow>
            <SmallRow $gap={5}><CheckBox /><Fit w={45.6}>Gridlines</Fit></SmallRow>
            <SmallRow $gap={5}><CheckBox /><Fit w={87}>Navigation Pane</Fit></SmallRow>
          </SmallColumn>
        </Group>
        <Group w={200} pad={4} label={[29, "Zoom"]}>
          <Big w={42} icon={<IconZoom />} l1={[31.5, "Zoom"]} />
          <Big w={43} icon={<Icon100 />} l1={[28, "100%"]} />
          <SmallColumn $w={108} $pad={2}>
            <Small icon={small.one} w={51} gap={3}>One Page</Small>
            <Small icon={small.multi} w={78} gap={3}>Multiple Pages</Small>
            <Small icon={small.width} w={60.6} gap={3}>Page Width</Small>
          </SmallColumn>
        </Group>
        <Group w={377} pad={4} label={[43.5, "Window"]}>
          <Big w={48} icon={<IconNewWin />} l1={[23.3, "New"]} l2={[43.6, "Window"]} />
          <Big w={48} icon={<IconArrange />} l1={[42, "Arrange"]} l2={[13.5, "All"]} />
          <Big w={42} icon={<IconSplit />} l1={[23, "Split"]} />
          <Divider $gap={4} />
          <SmallColumn $w={158} $pad={7}>
            <Small icon={small.side} w={91.3} gap={3}>View Side by Side</Small>
            <Small icon={small.sync} w={118} gap={3} off>Synchronous Scrolling</Small>
            <Small icon={small.reset} w={120.6} gap={3} off>Reset Window Position</Small>
          </SmallColumn>
          <Divider />
          <Big w={70} icon={<IconSwitch />} l1={[34.3, "Switch"]} l2={[49, "Windows"]} caret />
        </Group>
        <Group w={53} pad={1} label={[36, "Macros"]}>
          <Big w={50} icon={<IconMacros />} l1={[38.3, "Macros"]} caret />
        </Group>
        <Group w={67} pad={1} label={[55.6, "SharePoint"]}>
          <Big w={65} icon={<IconProps />} l1={[53, "Properties"]} />
        </Group>
        <Collapse><Svg w={9} h={6}><path d="M.8 5.200L4.500 1.500 8.200 5.200" stroke="#666" strokeWidth="1.800" /></Svg></Collapse>
      </Ribbon>

      <DocArea>
        <Sheets>
          <Page n="9" end={9}>
            <P lines={[[313.7, "GPS to verify a student’s physical location. This Java-based system is designed for"], [316.3, "institutions offering fieldwork or off-campus programs, allowing attendance to be"]]} />
          </Page>
          <Page n="10" end={7.5}>
            <P kind="tiny" level={1} mark="3." lines={[[307.3, "**High Implementation and Maintenance Costs**: Advanced biometric and RFID systems can be costly"], [209, "to install and maintain, limiting accessibility for smaller institutions."]]} />
          </Page>
          <Page n="11" end={10}>
            <P level={1} lines={[[301.7, "to manage attendance data securely and efficiently without the need for local"], [86.3, "storage infrastructure."]]} />
          </Page>
          <Page n="12">{list(page12)}</Page>
          <Page n="13">
            <P lines={[[325, "offers a balance between security, flexibility, and efficiency, meeting the attendance"], [309.7, "needs of institutions today while remaining adaptable for future advancements."]]} />
            <Heading><Fit w={67.5}>3. Methodology</Fit></Heading>
            {list(page13)}
          </Page>
          <Page n="14">{list(page14)}</Page>
          <Page n="15">
            <P kind="soft" level={2} mark="ring" lines={[[262.3, "A support system was established to assist users with technical issues,"], [201.3, "ensuring prompt responses to inquiries and concerns."]]} />
          </Page>
          <Page n="16">
            <P kind="soft" level={2} mark="ring" lines={[[264, "Several case studies of successful attendance management systems were"], [284.3, "reviewed to understand their architectures, functionalities, and user feedback."], [252, "These case studies provided practical insights into the implementation"]]} />
          </Page>
          <Page n="17">
            <P kind="soft" level={1} mark="dot" lines={[[133.3, "**Confidentiality and Data Protection:**"]]} />
            <P kind="soft" level={2} mark="ring" lines={[[266.3, "Stringent measures were taken to protect the confidentiality of user data."]]} />
          </Page>
        </Sheets>
        <ScrollTrack>
          <ScrollButton><Svg w={9} h={5}><path d="M0 5h9L4.500 0z" fill="#666" /></Svg></ScrollButton>
          <ScrollThumb />
          <ScrollButton><Svg w={9} h={5}><path d="M0 0h9L4.500 5z" fill="#666" /></Svg></ScrollButton>
        </ScrollTrack>
      </DocArea>

      <StatusBar>
        <StatusItem $w={95.5} $pad={8} $lift={2}><Fit w={68.5}>Page 17 of 31</Fit></StatusItem>
        <StatusItem $w={107.5}><Fit w={87.5}>12 of 7344 words</Fit></StatusItem>
        <StatusItem $w={31} $lift={2}>
          <Svg w={15} h={14}><path d="M6.500 2.500Q5 1 .5 1.500v10q4-.5 6 1.500 1-1.500 3-1.500M6.500 2.500V13M6.500 2.500Q8 1 13.500 1.500" stroke={G} /><path d="M9 4l5 6M14 4l-5 6" stroke={G} strokeWidth="1.500" /></Svg>
        </StatusItem>
        <StatusItem $w={920}><Fit w={72.6}>English (India)</Fit></StatusItem>
        <ViewMode><Svg w={14} h={16}><path d="M.5 2.500l6 1 6-1v9l-6 1-6-1zM6.500 3.500v10M2 5.500h3M2 7.500h3M2 9.500h3M8 5.500h3M8 7.500h3M8 9.500h3" stroke={G} /></Svg></ViewMode>
        <ViewMode $on><Svg w={14} h={15}><path d={"M.5 .5h13v12H.5z" + hlines(2, 12, [3.5, 5.5, 7.5, 9.5])} stroke="#555" /></Svg></ViewMode>
        <ViewMode><Svg w={14} h={15}><path d="M6 11.500H.5v-11h11V5M2 3.500h8M2 5.500h6M2 7.500h4" stroke={G} /><circle cx="10" cy="9" r="4" fill={G} /><path d="M8 8l2 1-1 2M11 6l1 2" stroke="#f3f3f3" /></Svg></ViewMode>
        <ZoomSlider>
          <Svg w={121} h={14}><path d="M0 7.500h6M113 7.500h7M116.500 4v7" stroke="#555" strokeWidth="2" /><path d="M10 7.500h100M60.500 5v5" stroke="#a6a6a6" /><rect x="30" y="2" width="5" height="11" fill="#555" /></Svg>
        </ZoomSlider>
        <StatusItem $w={24} $lift={2}><Fit w={21.3}>48%</Fit></StatusItem>
      </StatusBar>

      <TaskBar>
        <Start><Svg w={16} h={16}><path d="M0 2.200L6.700 1.300V7.500H0zM7.600 1.200L16 0V7.500H7.600zM0 8.400H6.700V14.700L0 13.800zM7.600 8.400H16V16L7.600 14.800z" fill="#fff" /></Svg></Start>
        <Search>
          <Svg w={18} h={18} stroke="#222"><circle cx="11" cy="6.500" r="5.300" strokeWidth="1.400" /><path d="M7.200 10.500L1 16.800" strokeWidth="1.500" /></Svg>
          <SearchText><Fit w={127.6}>Type here to search</Fit></SearchText>
          <Svg w={52} h={38}>
            <circle cx="20" cy="19" r="18.500" fill="#5b4a45" /><circle cx="20" cy="19" r="16.500" fill="#e9dfd2" />
            <path d="M20 12q2-8 10-9l-2 4 8 1-3 4 5 4-5 5-14-1z" fill="#a5c93a" /><path d="M22 17l8-10M24 18l10-6" stroke="#cfe67c" strokeWidth="1.500" />
            <path d="M18 22l16-2q3 6-4 12l-10 3z" fill="#b9805f" /><g fill="#d5a080"><circle cx="24" cy="25" r="2.500" /><circle cx="30" cy="23" r="2.500" /><circle cx="27" cy="30" r="2.500" /><circle cx="21" cy="31" r="2.500" /></g>
            <g fill="#e6f2c4" stroke="#3f9a35" strokeWidth="1.500"><circle cx="16.500" cy="7.500" r="4" /><circle cx="8" cy="9.500" r="4" /><circle cx="12.500" cy="15" r="4.300" /></g>
            <g fill="#7fb95a"><circle cx="16.500" cy="7.500" r="1" /><circle cx="8" cy="9.500" r="1" /><circle cx="12.500" cy="15" r="1" /></g>
            <g fill="#fff" stroke="#e83e78" strokeWidth="1.400"><circle cx="8" cy="24" r="3.300" /><circle cx="14.500" cy="24.500" r="3.300" /><circle cx="11" cy="29.500" r="3.600" /></g>
            <path d="M40 2l8 30M45 2l-6 32" stroke="#a8682c" strokeWidth="2" />
          </Svg>
        </Search>
        <TaskItem><Svg w={17} h={16} stroke="#fff" strokeWidth="1.200"><path d="M.6 5V.5M11.400 .5V3.500H.6M.6 5.500h10.800v5H.6zM.6 15.500v-3h10.800v3M14.500 0v3M14.500 8.500v7" /><rect x="13.300" y="4" width="2.500" height="2.500" fill="#fff" stroke="none" /></Svg></TaskItem>
        <TaskItem $w={52} $pad={2}><Office c="#1e7145" letter="X" kids={<path d="M14 7h7M14 10h7M14 13h7M14 16h7M17.500 5v14" stroke="#1e7145" />} /></TaskItem>
        <TaskItem $active $open><Office c="#2b579a" letter="W" kids={<path d="M14 7h7M14 9.500h7M14 12h7M14 14.500h7M14 17h7" stroke="#2b579a" />} /></TaskItem>
        <TaskItem $w={50} $open><Chrome><circle cx="18.500" cy="18.500" r="7.700" fill="#cfe6dc" /><path d="M12 21q2-4 5-3 2-4 5 1 3 0 3 3z" fill="#3b4a48" /><path d="M13 16l5-2 6 2-3 2z" fill="#f5faf7" /></Chrome></TaskItem>
        <TaskItem><Svg w={22} h={20}><path d="M0 1h8l2 2h12v16H0z" fill="#e8a33d" /><path d="M0 5h22v13H0z" fill="#ffd767" /><path d="M4 19v-6q0-2 2-2h10q2 0 2 2v6h-4v-4H8v4z" fill="#3f97dc" /></Svg></TaskItem>
        <TaskItem><Svg w={23} h={23}><path d="M7 2l14 1 1 16-5 3z" fill="#c9a86a" /><path d="M6 1l13 1-3 19L0 17z" fill="#8fd0dd" /><path d="M6 1l13 1-1 6-14-3z" fill="#d8eef2" /><path d="M10 8l8 1-2 12-8-2z" fill="#4fa7ba" opacity=".7" /></Svg></TaskItem>
        <TaskItem $w={52} $open><Chrome><circle cx="18.500" cy="18.500" r="7.700" fill="#6cc7fb" /><circle cx="18.500" cy="18.500" r="5.600" fill="#139cf5" /><path d="M17 17l3 3" stroke="#fff" strokeWidth="3.500" strokeLinecap="round" /></Chrome></TaskItem>
        <TaskItem $w={46} $open><Svg w={21} h={22}><rect width="21" height="22" rx="5" fill="#fff" /><path d="M17.500 6.500L15 6H4.500v2.500L17 14.500v1.500H5l-1-.5M4 15l13-7" stroke="#000" strokeWidth="2" /></Svg></TaskItem>
        <Tray>
          <TraySlot $w={34}>
            <Svg w={25} h={24}><circle cx="12.500" cy="12" r="10.500" fill="#f29c1f" /><path d="M0 17.500h17M4 21h12M0 13h19M3 8.500h9M6 5h6" stroke="#fbe09b" strokeWidth="1.800" /><circle cx="18" cy="6" r="6" fill="#d22b22" /><text x="18" y="9" textAnchor="middle" fontSize="8" fontFamily="Open Sans" fill="#fff">1</text></Svg>
          </TraySlot>
          <TraySlot $w={38}><Fit w={28.5}>18°C</Fit></TraySlot>
          <TraySlot $w={54}><Fit w={30.5}>Haze</Fit></TraySlot>
          <TraySlot $w={97}>
            <Svg w={88} h={18} stroke="#fff">
              <path d="M.5 11.500L6.500 5.500l6 6" strokeWidth="1.300" />
              <rect x="25.500" y="5.500" width="7" height="7" rx="1.500" strokeWidth="1.300" /><path d="M33 8l2.500-2v6L33 10M26 3.500q4-3.500 8 0M26 15q4 3 8 0" />
              <circle cx="60" cy="15" r="1.200" fill="#fff" /><path d="M56.500 15.500q0-4 4-4M53.500 15.500q0-7 7-7" /><path d="M50.500 15.500q0-10 10-10" stroke="#8b9094" />
              <path d="M71.500 7.500h2.500l4-4v11l-4-4h-2.500zM80.500 7q1 2 0 4M82.500 5.500q2.500 3.500 0 7" /><path d="M84.500 3.500q4 5.500 0 11" stroke="#8b9094" />
            </Svg>
          </TraySlot>
          <TraySlot $w={34} $size={11.5}><Fit w={23}>ENG</Fit></TraySlot>
          <TraySlot $w={63} $col $size={11.5} $mid><Fit w={27}>02:43</Fit><Fit w={58}>19-11-2024</Fit></TraySlot>
          <TraySlot $w={51} $mid>
            <Svg w={25} h={33}><g transform="translate(0 8)"><path d="M0 1h16v12H6l-3.500 3.500V13H0z" fill="#fff" /><path d="M3 4.500h10M3 7h10M3 9.500h7" stroke="#3a4149" /><circle cx="15.500" cy="16" r="7.700" fill="#383e45" stroke="#989c9f" /><text x="15.500" y="20" textAnchor="middle" fontSize="11" fontFamily="Open Sans" fill="#fff">1</text></g></Svg>
          </TraySlot>
          <ShowDesktop />
        </Tray>
      </TaskBar>
    </Window>
  );
}
